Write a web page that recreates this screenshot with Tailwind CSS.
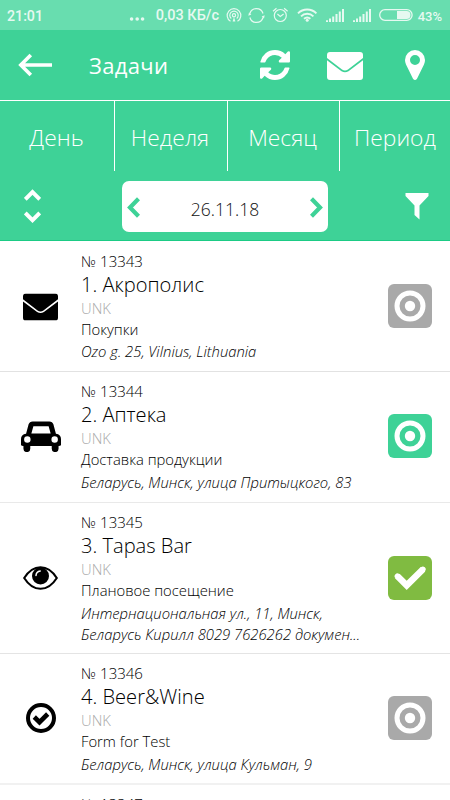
<!DOCTYPE html>
<html lang="ru">
<head>
<meta charset="utf-8">
<title>Задачи</title>
<script src="https://cdn.jsdelivr.net/npm/@tailwindcss/browser@4"></script>
</head>
<body class="w-[450px] h-[800px] overflow-hidden bg-white font-['Open_Sans','Noto_Sans',sans-serif] font-light text-black">
<svg class="hidden">
  <symbol id="mail" viewBox="0 0 36 28"><path d="M3 0H33Q36 0 36 3V6L21 17.5Q18 19.5 15 17.5L0 6V3Q0 0 3 0ZM0 8.3L14.5 19.2Q18 21.3 21.5 19.2L36 8.3V25Q36 28 33 28H3Q0 28 0 25Z"/></symbol>
  <symbol id="target" viewBox="0 0 44 44"><circle cx="22" cy="22" r="13" fill="none" stroke="#fff" stroke-width="5"/><circle cx="22" cy="22" r="5.2" fill="#fff"/></symbol>
</svg>
<div class="w-[450px] h-[800px] overflow-hidden flex flex-col">
  <div class="h-[30px] shrink-0 bg-[#68ddaf] flex items-center pl-[7px] pr-[8px] text-[#e6f9f1] font-['Roboto',sans-serif] font-medium">
    <span class="text-[14.2px] leading-none w-[122px] pt-[2px]">21:01</span>
    <svg class="w-[16px] h-[20px] mr-[11px]" viewBox="0 0 16 20" fill="currentColor"><circle cx="2.6" cy="14" r="1.8"/><circle cx="8.2" cy="14" r="1.8"/><circle cx="13.6" cy="14" r="1.8"/></svg>
    <span class="text-[14.5px] leading-none w-[70px] pt-[2px] whitespace-nowrap">0,03 КБ/с</span>
    <svg class="w-[154px] h-[20px] shrink-0" viewBox="226 5 154 20" fill="none" stroke="currentColor" stroke-width="1.2">
      <path d="M230.5 21.3A6.8 6.8 0 1 1 237.5 21.3M231.3 18.5A4.2 4.2 0 1 1 236.7 18.5"/><circle cx="234" cy="15.3" r="1.6"/><path d="M234 17L232.6 21.5H235.4Z" fill="currentColor" stroke="none"/>
      <path d="M249.9 13.5A6.8 6.8 0 0 1 263 13.5M263 17.5A6.8 6.8 0 0 1 249.9 17.5"/><path d="M248.300 15.800L249 12.600L251.400 14.500ZM264.700 15.200L264 18.400L261.600 16.500Z" fill="currentColor" stroke="none"/>
      <circle cx="280.300" cy="15.500" r="6"/><path d="M273 11.200L276.500 8.200M287.600 11.200L284.100 8.200M277.400 14L280.300 16.500L283.600 14"/>
      <g stroke-width="1.900"><path d="M298 13.300A13 13 0 0 1 316.400 13.300M301 16.300A8.800 8.800 0 0 1 313.400 16.300M304 18.800A5 5 0 0 1 310.400 18.800"/></g><circle cx="307.200" cy="20.300" r="1.500" fill="currentColor" stroke="none"/>
      <path stroke-width="2" d="M327 22V20.300M330 22V18.500M333.200 22V16.500M336.500 22V14M339.800 22V11.500M343 22V9M354 22V20.300M357 22V18.500M360.200 22V16.500M363.500 22V14M366.800 22V11.500M370 22V9"/>
    </svg>
    <svg class="w-[34px] h-[12px] shrink-0 -ml-px" viewBox="0 0 34 12" fill="none"><rect x=".7" y=".7" width="32.400" height="10.600" rx="5.300" stroke="currentColor" stroke-width="1.300"/><path d="M18 2H27.500A4 4 0 0 1 27.500 10H18Z" fill="currentColor"/></svg>
    <span class="text-[13px] leading-none ml-[5px] pt-[2px]">43%</span>
  </div>

  <header class="h-[70px] shrink-0 bg-[#3ed297] flex items-center pl-[18px] pr-[25px] text-white">
    <svg class="w-[34px] h-[24px]" viewBox="0 0 34 24" fill="none" stroke="currentColor" stroke-width="3.600"><path d="M34 12H3M12.800 2L2.800 12L12.800 22"/></svg>
    <h1 class="ml-[37px] w-[171px] text-[22px] tracking-[0.35px] leading-none font-normal">Задачи</h1>
    <svg class="w-[30px] h-[30px]" viewBox="0 0 1536 1536" fill="currentColor"><path d="M1511 928q0 5-1 7-64 268-268 434.500t-478 166.500q-146 0-282.500-55t-243.500-157l-129 129q-19 19-45 19t-45-19-19-45v-448q0-26 19-45t45-19h448q26 0 45 19t19 45-19 45l-137 137q71 66 161 102t187 36q134 0 250-65t186-179q11-17 53-117 8-23 30-23h192q13 0 22.500 9.500t9.500 22.500zm25-800v448q0 26-19 45t-45 19h-448q-26 0-45-19t-19-45 19-45l138-138q-148-137-349-137-134 0-250 65t-186 179q-11 17-53 117-8 23-30 23h-199q-13 0-22.500-9.500t-9.500-22.500v-7q65-268 270-434.500t480-166.500q146 0 284 55.500t245 156.500l130-129q19-19 45-19t45 19 19 45z"/></svg>
    <svg class="w-[36px] h-[28px] ml-[37px] mt-[2px]" fill="currentColor"><use href="#mail"/></svg>
    <svg class="w-[20px] h-[30px] ml-auto" viewBox="0 0 20 30" fill="currentColor" fill-rule="evenodd"><path d="M10 0A10 10 0 0 1 20 10Q20 12.500 19 14.500L12 28.700Q10 31.200 8 28.700L1 14.500Q0 12.500 0 10A10 10 0 0 1 10 0ZM10 5A5 5 0 1 0 10 15A5 5 0 0 0 10 5Z"/></svg>
  </header>

  <nav class="h-[71px] shrink-0 bg-[#3ed297] border-t border-white grid grid-cols-[115px_113px_112px_110px] text-white text-[22.8px] text-center leading-[73px]">
    <div class="border-r border-white pr-px">День</div>
    <div class="border-r border-white pr-[2px]">Неделя</div>
    <div class="border-r border-white pr-[2px]">Месяц</div>
    <div>Период</div>
  </nav>

  <div class="h-[70px] shrink-0 bg-[#3ed297] border-b border-[#1bcb85] flex items-start pl-[24px] pr-[21px] pt-[10px] text-white">
    <svg class="w-[17px] h-[34px] mt-[8px]" viewBox="0 0 17 34" fill="none" stroke="currentColor" stroke-width="3.900"><path d="M1.300 10.300L8.500 3.100L15.700 10.300M1.300 24L8.500 31.200L15.700 24"/></svg>
    <div class="ml-[81px] w-[206px] h-[51px] rounded-[7px] bg-white flex items-center justify-between px-[5px] text-[#111] text-[17.5px]">
      <svg class="w-[13px] h-[21px] mt-[2px]" viewBox="0 0 13 21" fill="none" stroke="#3ed297" stroke-width="4.200"><path d="M11.500 1.800L3 10.500L11.500 19.200"/></svg>
      <span class="mt-[5px]">26.11.18</span>
      <svg class="w-[13px] h-[21px] mt-[2px]" viewBox="0 0 13 21" fill="none" stroke="#3ed297" stroke-width="4.200"><path d="M1.500 1.800L10 10.500L1.500 19.200"/></svg>
    </div>
    <svg class="w-[24px] h-[27px] ml-auto mt-[12px]" viewBox="0 0 24 27" fill="currentColor"><path d="M.5 0H23.500V3L14.500 12.500V26.500L9.500 22V12.500L.5 3Z"/></svg>
  </div>

  <main class="flex flex-col">
    <article class="h-[131px] shrink-0 border-b border-[#e2e2e2] flex pt-[10px]">
      <div class="w-[81px] shrink-0 h-[111px] flex items-center justify-center"><svg class="w-[35px] h-[28px] mt-[1px]" viewBox="0 0 36 28"><use href="#mail"/></svg></div>
      <div class="w-[306.5px] shrink-0 whitespace-nowrap">
        <p class="text-[15px] leading-[20px]">№ 13343</p>
        <h2 class="text-[20.1px] leading-[28px] font-light">1. Акрополис</h2>
        <p class="text-[14.8px] leading-[19px] text-[#aaa]">UNK</p>
        <p class="text-[14.8px] leading-[22px]">Покупки</p>
        <p class="text-[14.8px] leading-[21px] pt-[1px] italic">Ozo g. 25, Vilnius, Lithuania</p>
      </div>
      <div class="w-[44px] h-[44px] mt-[33px] rounded-[6px] bg-[#a9a9a9]"><svg class="w-[44px] h-[44px]"><use href="#target"/></svg></div>
    </article>

    <article class="h-[131px] shrink-0 border-b border-[#e9e9e9] flex pt-[9px]">
      <div class="w-[81px] shrink-0 h-[111px] flex items-center justify-center"><svg class="w-[40px] h-[31px]" viewBox="0 0 41 31"><path fill-rule="evenodd" d="M12 0H29Q32.300 0 33.200 3L35.800 12.700Q41 13.500 41 18V24Q41 25.200 38.500 25.200V28A3 3 0 0 1 31.500 28V25.200H9.500V28A3 3 0 0 1 2.500 28V25.200Q0 25.200 0 24V18Q0 13.500 5.200 12.700L7.800 3Q8.700 0 12 0ZM12.700 5L10.600 12.500H30.400L28.300 5ZM6.500 15.300A3.300 3.300 0 1 0 6.500 21.900A3.300 3.300 0 1 0 6.500 15.300ZM34.500 15.300A3.300 3.300 0 1 0 34.500 21.900A3.300 3.300 0 1 0 34.500 15.300Z"/></svg></div>
      <div class="w-[306.5px] shrink-0 whitespace-nowrap">
        <p class="text-[15px] leading-[20px]">№ 13344</p>
        <h2 class="text-[20.1px] leading-[28px] font-light">2. Аптека</h2>
        <p class="text-[14.8px] leading-[19px] text-[#aaa]">UNK</p>
        <p class="text-[14.8px] leading-[22px]">Доставка продукции</p>
        <p class="text-[14.8px] leading-[21px] pt-[2px] italic">Беларусь, Минск, улица Притыцкого, 83</p>
      </div>
      <div class="w-[44px] h-[44px] mt-[33px] rounded-[6px] bg-[#3ed297]"><svg class="w-[44px] h-[44px]"><use href="#target"/></svg></div>
    </article>

    <article class="h-[151px] shrink-0 border-b border-[#e4e4e4] flex pt-[9px]">
      <div class="w-[81px] shrink-0 h-[131px] flex items-center justify-center"><svg class="w-[35px] h-[24px]" viewBox="0 0 35 24"><path d="M1.200 12Q8 1.200 17.500 1.200T33.800 12Q27 22.800 17.500 22.800T1.200 12Z" fill="none" stroke="#000" stroke-width="2.100"/><circle cx="17.500" cy="10" r="8.500"/><path d="M13 9.500Q13.200 5.600 17.200 5" stroke="#fff" stroke-width="1.500" fill="none" stroke-linecap="round"/></svg></div>
      <div class="w-[306.5px] shrink-0 whitespace-nowrap">
        <p class="text-[15px] leading-[20px]">№ 13345</p>
        <h2 class="text-[20.1px] leading-[28px] font-light">3. Tapas Bar</h2>
        <p class="text-[14.8px] leading-[19px] text-[#aaa]">UNK</p>
        <p class="text-[14.8px] leading-[22px]">Плановое посещение</p>
        <p class="text-[14.8px] leading-[21px] pt-[2px] italic">Интернациональная ул., 11, Минск,<br>Беларусь Кирилл 8029 7626262 докумен...</p>
      </div>
      <div class="w-[44px] h-[44px] mt-[44px] rounded-[6px] bg-[#80bb41]"><svg class="w-[44px] h-[44px]" viewBox="0 0 44 44" fill="none" stroke="#fff" stroke-width="6.500" stroke-linejoin="miter"><path d="M9.300 20L18.700 29.400L35 13.200"/><path d="M9.800 20.500L9.400 20.100M34.500 13.700L34.900 13.300" stroke-linecap="round" stroke-width="5.500"/></svg></div>
    </article>

    <article class="h-[131px] shrink-0 border-b-2 border-[#f1f1f1] flex pt-[9px]">
      <div class="w-[81px] shrink-0 h-[111px] flex items-center justify-center"><svg class="w-[30px] h-[30px] -mt-px" viewBox="0 0 30 30" fill="none" stroke="#000"><circle cx="15" cy="15" r="13" stroke-width="4"/><path d="M8.300 14L13.500 19.200L21.700 11" stroke-width="4.600"/></svg></div>
      <div class="w-[306.5px] shrink-0 whitespace-nowrap">
        <p class="text-[15px] leading-[20px]">№ 13346</p>
        <h2 class="text-[20.1px] leading-[28px] font-light">4. Beer&amp;Wine</h2>
        <p class="text-[14.8px] leading-[19px] text-[#aaa]">UNK</p>
        <p class="text-[14.8px] leading-[22px]">Form for Test</p>
        <p class="text-[14.8px] leading-[21px] pt-[2px] italic">Беларусь, Минск, улица Кульман, 9</p>
      </div>
      <div class="w-[44px] h-[44px] mt-[33px] rounded-[6px] bg-[#a9a9a9]"><svg class="w-[44px] h-[44px]"><use href="#target"/></svg></div>
    </article>

    <article class="h-[131px] shrink-0 pt-[9px] pl-[81px]">
      <p class="text-[15px] leading-[20px]">№ 13347</p>
    </article>
  </main>
</div>
</body>
</html>
